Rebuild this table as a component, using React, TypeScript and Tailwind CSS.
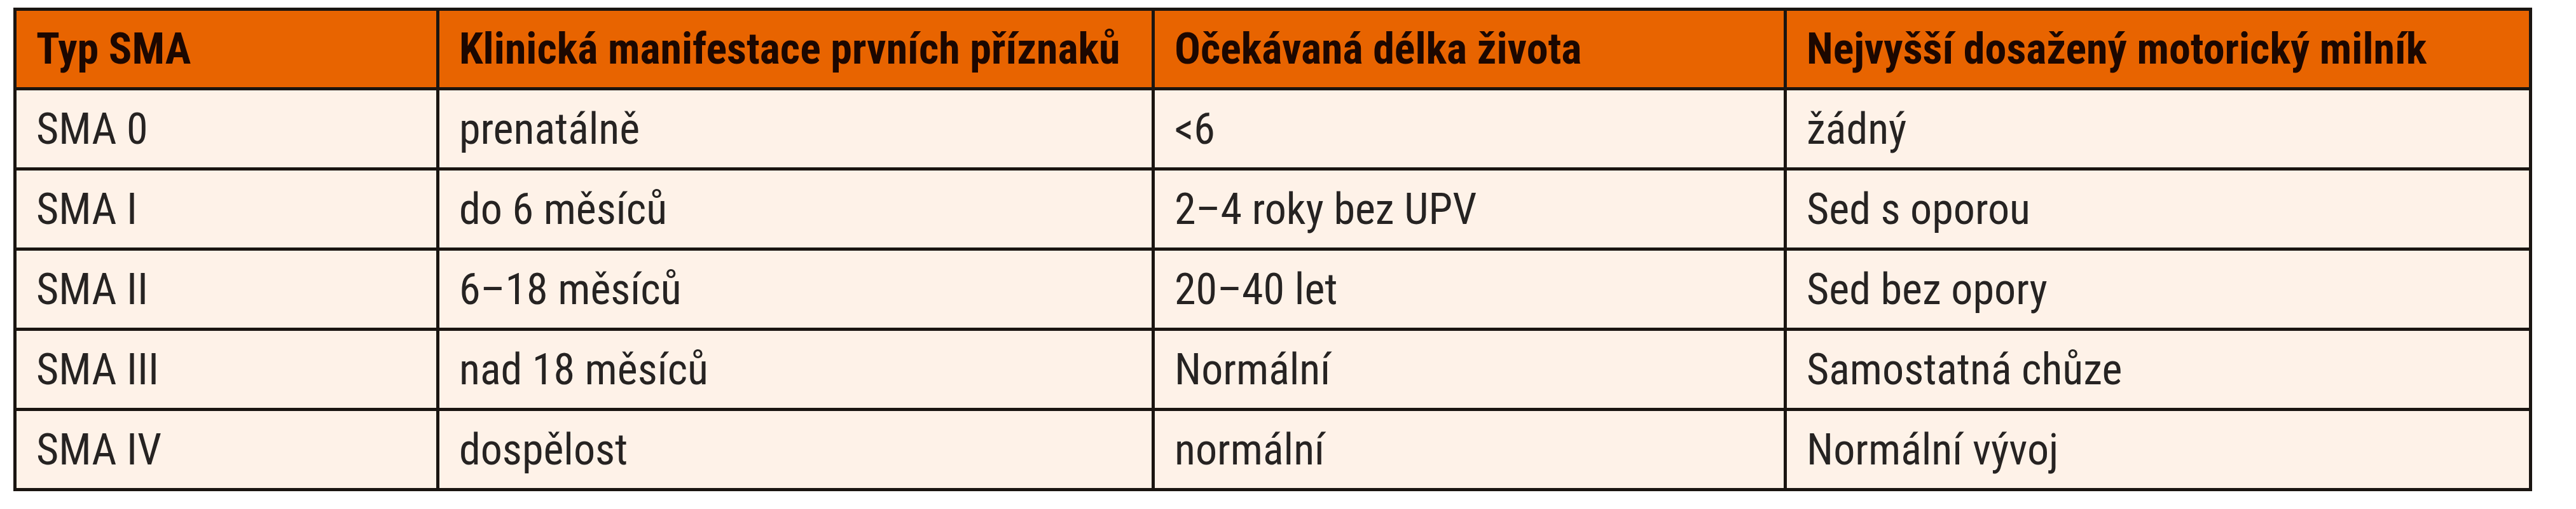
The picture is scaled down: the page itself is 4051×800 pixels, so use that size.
const HEADERS = [
  'Typ SMA',
  'Klinická manifestace prvních příznaků',
  'Očekávaná délka života',
  'Nejvyšší dosažený motorický milník',
]

const ROWS = [
  ['SMA 0', 'prenatálně', '<6', 'žádný'],
  ['SMA I', 'do 6 měsíců', '2–4 roky bez UPV', 'Sed s oporou'],
  ['SMA II', '6–18 měsíců', '20–40 let', 'Sed bez opory'],
  ['SMA III', 'nad 18 měsíců', 'Normální', 'Samostatná chůze'],
  ['SMA IV', 'dospělost', 'normální', 'Normální vývoj'],
]

export default function App() {
  return (
    <div
      className="min-h-[800px] w-[4051px] bg-white pt-[12px] pl-[21px]"
      style={{ fontFamily: "'Roboto Condensed', 'Liberation Sans', sans-serif" }}
    >
      <div className="inline-grid grid-cols-[660px_1120px_989px_1167px] gap-[5px] bg-[#1a1511] p-[5px] text-[68px] leading-none">
        {HEADERS.map((h) => (
          <div key={h} className="flex h-[120px] items-center bg-[#e86400] pl-[31px] font-bold whitespace-nowrap text-[#1c0700]">
            {h}
          </div>
        ))}
        {ROWS.map((row) =>
          row.map((cell, i) => (
            <div key={row[0] + i} className="flex h-[121px] items-center bg-[#fef2e8] pl-[31px] whitespace-nowrap text-[#262322]">
              {cell}
            </div>
          ))
        )}
      </div>
    </div>
  )
}
